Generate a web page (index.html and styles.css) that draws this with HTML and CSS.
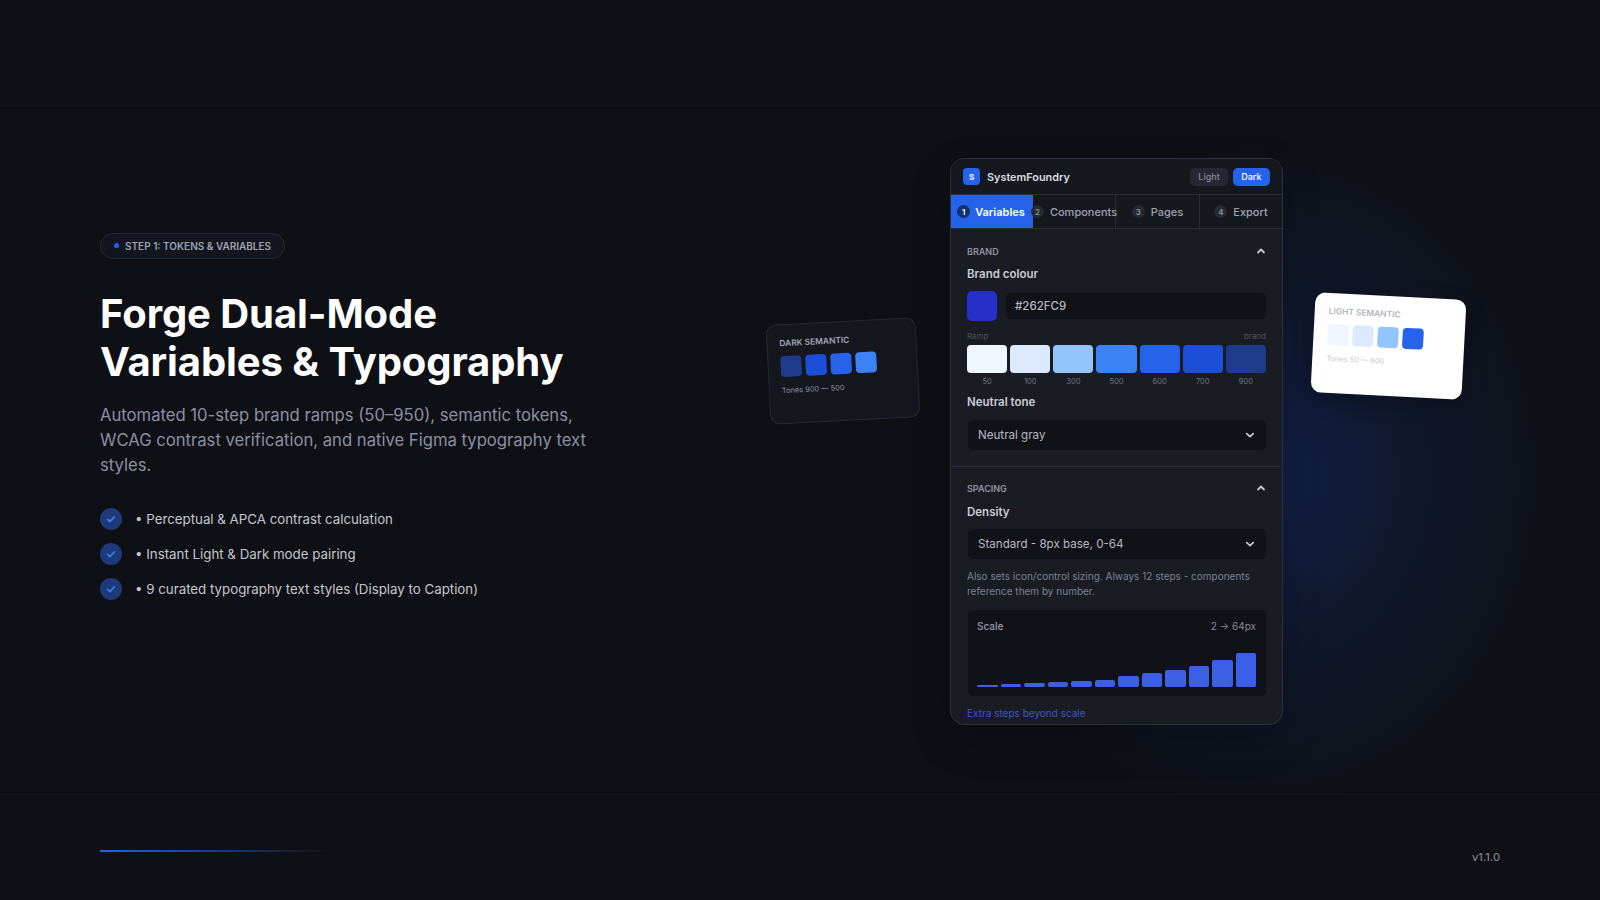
FILE: index.html
```html
<!DOCTYPE html>
<html lang="en">
<head>
    <meta charset="UTF-8">
    <meta name="viewport" content="width=device-width, initial-scale=1.0">
    <title>SystemFoundry - Tokens &amp; Variables</title>
    <link rel="stylesheet" href="styles.css">
</head>
<body>
    <div class="top-band"></div>

    <main class="stage">
        <div class="glow"></div>

        <section class="intro">
            <div class="step-badge"><span class="step-dot"></span>STEP 1: TOKENS &amp; VARIABLES</div>
            <h1 class="headline">Forge Dual-Mode<br>Variables &amp; Typography</h1>
            <p class="lead">Automated 10-step brand ramps (50–950), semantic tokens, WCAG contrast verification, and native Figma typography text styles.</p>
            <ul class="features">
                <li class="feature">
                    <span class="check"><svg width="12" height="12" viewBox="0 0 12 12" fill="none"><path d="M2.6 6.4l2.3 2.2 4.5-4.8" stroke="#3b82f6" stroke-width="1.6" stroke-linecap="round" stroke-linejoin="round"/></svg></span>
                    • Perceptual &amp; APCA contrast calculation
                </li>
                <li class="feature">
                    <span class="check"><svg width="12" height="12" viewBox="0 0 12 12" fill="none"><path d="M2.6 6.4l2.3 2.2 4.5-4.8" stroke="#3b82f6" stroke-width="1.6" stroke-linecap="round" stroke-linejoin="round"/></svg></span>
                    • Instant Light &amp; Dark mode pairing
                </li>
                <li class="feature">
                    <span class="check"><svg width="12" height="12" viewBox="0 0 12 12" fill="none"><path d="M2.6 6.4l2.3 2.2 4.5-4.8" stroke="#3b82f6" stroke-width="1.6" stroke-linecap="round" stroke-linejoin="round"/></svg></span>
                    • 9 curated typography text styles (Display to Caption)
                </li>
            </ul>
        </section>

        <div class="float-card float-dark">
            <div class="float-title">DARK SEMANTIC</div>
            <div class="float-swatches">
                <span class="float-swatch tone-900"></span>
                <span class="float-swatch tone-700"></span>
                <span class="float-swatch tone-600"></span>
                <span class="float-swatch tone-500"></span>
            </div>
            <div class="float-note">Tones 900 — 500</div>
        </div>

        <div class="float-card float-light">
            <div class="float-title">LIGHT SEMANTIC</div>
            <div class="float-swatches">
                <span class="float-swatch tone-50"></span>
                <span class="float-swatch tone-100"></span>
                <span class="float-swatch tone-300"></span>
                <span class="float-swatch tone-600"></span>
            </div>
            <div class="float-note">Tones 50 — 600</div>
        </div>

        <section class="plugin">
            <header class="plugin-head">
                <span class="logo">S</span>
                <span class="plugin-name">SystemFoundry</span>
                <span class="mode">Light</span>
                <span class="mode mode-on">Dark</span>
            </header>

            <nav class="tabs">
                <div class="tab tab-on"><span class="tab-num">1</span>Variables</div>
                <div class="tab"><span class="tab-num">2</span>Components</div>
                <div class="tab"><span class="tab-num">3</span>Pages</div>
                <div class="tab"><span class="tab-num">4</span>Export</div>
            </nav>

            <div class="group group-brand">
                <div class="group-head">BRAND
                    <svg width="10" height="10" viewBox="0 0 10 10" fill="none"><path d="M2 6.5l3-3 3 3" stroke="#c3c7d0" stroke-width="1.8" stroke-linecap="round" stroke-linejoin="round"/></svg>
                </div>
                <div class="field-label">Brand colour</div>
                <div class="colour-row">
                    <span class="colour-chip"></span>
                    <div class="colour-input">#262FC9</div>
                </div>
                <div class="ramp-head"><span>Ramp</span><span>brand</span></div>
                <div class="ramp">
                    <div class="ramp-step"><span class="ramp-chip tone-50"></span>50</div>
                    <div class="ramp-step"><span class="ramp-chip tone-100"></span>100</div>
                    <div class="ramp-step"><span class="ramp-chip tone-300"></span>300</div>
                    <div class="ramp-step"><span class="ramp-chip tone-500"></span>500</div>
                    <div class="ramp-step"><span class="ramp-chip tone-600"></span>600</div>
                    <div class="ramp-step"><span class="ramp-chip tone-700"></span>700</div>
                    <div class="ramp-step"><span class="ramp-chip tone-900"></span>900</div>
                </div>
                <div class="field-label label-tone">Neutral tone</div>
                <div class="select">Neutral gray
                    <svg width="12" height="12" viewBox="0 0 12 12" fill="none"><path d="M2.8 4.6L6 7.6l3.2-3" stroke="#c3c7d0" stroke-width="1.8" stroke-linecap="round" stroke-linejoin="round"/></svg>
                </div>
            </div>

            <div class="group group-spacing">
                <div class="group-head">SPACING
                    <svg width="10" height="10" viewBox="0 0 10 10" fill="none"><path d="M2 6.5l3-3 3 3" stroke="#c3c7d0" stroke-width="1.8" stroke-linecap="round" stroke-linejoin="round"/></svg>
                </div>
                <div class="field-label">Density</div>
                <div class="select">Standard - 8px base, 0-64
                    <svg width="12" height="12" viewBox="0 0 12 12" fill="none"><path d="M2.8 4.6L6 7.6l3.2-3" stroke="#c3c7d0" stroke-width="1.8" stroke-linecap="round" stroke-linejoin="round"/></svg>
                </div>
                <p class="hint">Also sets icon/control sizing. Always 12 steps - components reference them by number.</p>
                <div class="scale">
                    <div class="scale-head"><span class="scale-title">Scale</span><span>2 → 64px</span></div>
                    <div class="bars">
                        <span class="bar" style="height: 2px"></span>
                        <span class="bar" style="height: 3px"></span>
                        <span class="bar" style="height: 4px"></span>
                        <span class="bar" style="height: 5px"></span>
                        <span class="bar" style="height: 6px"></span>
                        <span class="bar" style="height: 7px"></span>
                        <span class="bar" style="height: 11px"></span>
                        <span class="bar" style="height: 14px"></span>
                        <span class="bar" style="height: 17px"></span>
                        <span class="bar" style="height: 21px"></span>
                        <span class="bar" style="height: 27px"></span>
                        <span class="bar" style="height: 34px"></span>
                    </div>
                </div>
                <div class="extra-link">Extra steps beyond scale</div>
            </div>
        </section>
    </main>

    <footer class="bottom-band">
        <div class="progress"></div>
        <div class="version">v1.1.0</div>
    </footer>
</body>
</html>
```

FILE: styles.css
```css
:root {
    --bg: #0e1015;
    --panel: #1a1c24;
    --field: #111217;
    --line: #2a2d37;
    --blue: #2563eb;
    --muted: #8a90a3;
}

* {
    box-sizing: border-box;
}

body {
    margin: 0;
    width: 1600px;
    height: 900px;
    overflow: hidden;
    background: var(--bg);
    color: #fff;
    font-family: Inter, "Liberation Sans", sans-serif;
    display: flex;
    flex-direction: column;
}

.top-band {
    height: 106px;
    flex: none;
    border-bottom: 1px solid #16181e;
}

.stage {
    height: 688px;
    flex: none;
    position: relative;
    overflow: hidden;
    display: flex;
    justify-content: space-between;
    align-items: flex-start;
    padding: 52px 317px 0 100px;
}

.glow {
    position: absolute;
    left: 960px;
    top: 30px;
    width: 600px;
    height: 680px;
    background: radial-gradient(closest-side, rgba(29, 78, 216, 0.25), rgba(29, 78, 216, 0.11) 55%, rgba(29, 78, 216, 0) 100%);
}

/* left column */
.intro {
    width: 520px;
    padding-top: 74px;
    position: relative;
}

.step-badge {
    display: inline-flex;
    align-items: center;
    gap: 6px;
    height: 26px;
    padding: 0 13px;
    border: 1px solid #262a35;
    border-radius: 13px;
    background: #13161e;
    color: #9ca3b4;
    font-size: 10px;
    font-weight: 600;
}

.step-dot {
    width: 5px;
    height: 5px;
    border-radius: 50%;
    background: var(--blue);
}

.headline {
    margin: 31px 0 0;
    font-size: 40px;
    line-height: 48px;
    font-weight: 700;
    letter-spacing: -0.08px;
}

.lead {
    margin: 17px 0 0;
    width: 500px;
    font-size: 16.65px;
    line-height: 25px;
    color: var(--muted);
}

.features {
    list-style: none;
    margin: 30px 0 0;
    padding: 0;
    display: flex;
    flex-direction: column;
    gap: 13px;
}

.feature {
    display: flex;
    align-items: center;
    gap: 13px;
    height: 22px;
    font-size: 13.3px;
    color: #c4c7cf;
}

.check {
    width: 22px;
    height: 22px;
    border-radius: 50%;
    background: #1e3a7a;
    display: flex;
    align-items: center;
    justify-content: center;
}

/* floating token cards */
.float-card {
    position: absolute;
    width: 151px;
    height: 100px;
    padding: 13px 14px;
    border-radius: 10px;
}

.float-dark {
    left: 768px;
    top: 215px;
    width: 150px;
    padding-left: 12px;
    background: #15171e;
    border: 1px solid #262932;
    transform: rotate(-3deg);
}

.float-light {
    left: 1313px;
    top: 190px;
    background: #fff;
    box-shadow: 0 6px 20px rgba(0, 0, 0, 0.3);
    transform: rotate(3deg);
}

.float-title {
    font-size: 8.4px;
    line-height: 11px;
    font-weight: 600;
    color: #a3a8b5;
}

.float-light .float-title {
    color: #b0b4bd;
}

.float-swatches {
    display: flex;
    gap: 4px;
    margin-top: 7px;
}

.float-swatch {
    width: 21px;
    height: 21px;
    border-radius: 4px;
}

.float-note {
    margin-top: 9px;
    font-size: 7.4px;
    color: #8d92a0;
}

.float-light .float-note {
    color: #c8cbd2;
}

.tone-50 { background: #eff6ff; }
.tone-100 { background: #dbeafe; }
.tone-300 { background: #93c5fd; }
.tone-500 { background: #3b82f6; }
.tone-600 { background: #2563eb; }
.tone-700 { background: #1d4ed8; }
.tone-900 { background: #1e3a8a; }

/* plugin window */
.plugin {
    width: 333px;
    height: 567px;
    position: relative;
    background: var(--panel);
    border: 1px solid #2e313b;
    border-radius: 14px;
    overflow: hidden;
    box-shadow: 0 16px 40px rgba(0, 0, 0, 0.2);
}

.plugin-head {
    height: 36px;
    display: flex;
    align-items: center;
    padding: 0 12px;
    gap: 5px;
    border-bottom: 1px solid var(--line);
    background: #16181f;
}

.logo {
    width: 17px;
    height: 17px;
    border-radius: 4px;
    background: var(--blue);
    color: #fff;
    font-size: 8px;
    font-weight: 700;
    display: flex;
    align-items: center;
    justify-content: center;
}

.plugin-name {
    flex: 1;
    margin-left: 2px;
    font-size: 10.85px;
    font-weight: 600;
    color: #d9dbe1;
}

.mode {
    height: 18px;
    padding: 0 8px;
    border-radius: 5px;
    background: #252832;
    color: #878d9c;
    font-size: 9px;
    font-weight: 500;
    display: flex;
    align-items: center;
}

.mode-on {
    padding: 0 8.5px;
    background: var(--blue);
    color: #fff;
}

.tabs {
    height: 34px;
    display: grid;
    grid-template-columns: 82px 83px 84px 1fr;
    border-bottom: 1px solid var(--line);
    background: #16181f;
}

.tab {
    display: flex;
    align-items: center;
    justify-content: center;
    gap: 6px;
    font-size: 11px;
    font-weight: 500;
    color: #9ea3b0;
    border-right: 1px solid var(--line);
    white-space: nowrap;
}

.tab:last-child {
    border-right: 0;
}

.tab-on {
    gap: 5px;
    padding-right: 2px;
    background: var(--blue);
    color: #fff;
    font-weight: 600;
    border-right: 0;
}

.tab-num {
    width: 13px;
    height: 13px;
    border-radius: 50%;
    background: #262933;
    color: #8f94a1;
    font-size: 8px;
    font-weight: 600;
    display: flex;
    align-items: center;
    justify-content: center;
    flex: none;
}

.tab-on .tab-num {
    background: #12306f;
    color: #fff;
}

.group {
    padding: 0 16px;
}

.group-brand {
    height: 238px;
    padding-top: 16px;
    border-bottom: 1px solid var(--line);
    margin: 0 1px;
    padding-left: 15px;
    padding-right: 15px;
}

.group-spacing {
    padding-top: 15px;
}

.group-head {
    display: flex;
    justify-content: space-between;
    align-items: center;
    height: 12px;
    font-size: 9px;
    font-weight: 600;
    color: #8f94a3;
}

.field-label {
    margin-top: 10px;
    font-size: 11.5px;
    line-height: 14px;
    font-weight: 600;
    color: #c9ccd4;
}

.group-spacing .field-label {
    margin-top: 11px;
}

.colour-row {
    display: flex;
    align-items: center;
    gap: 9px;
    margin-top: 10px;
}

.colour-chip {
    width: 30px;
    height: 30px;
    border-radius: 5px;
    background: #262fc9;
}

.colour-input {
    flex: 1;
    height: 26px;
    padding-left: 9px;
    display: flex;
    align-items: center;
    border-radius: 5px;
    background: var(--field);
    font-size: 11.5px;
    font-weight: 500;
    color: #b6bac4;
}

.ramp-head {
    display: flex;
    justify-content: space-between;
    margin-top: 10px;
    font-size: 8px;
    line-height: 10px;
    color: #4d515d;
}

.ramp {
    display: grid;
    grid-template-columns: repeat(7, 1fr);
    gap: 3px;
    margin-top: 4px;
}

.ramp-step {
    display: flex;
    flex-direction: column;
    align-items: center;
    gap: 4px;
    font-size: 7.5px;
    line-height: 10px;
    color: #6f7482;
}

.ramp-chip {
    width: 100%;
    height: 28px;
    border-radius: 4px;
}

.label-tone {
    margin-top: 8px;
}

.select {
    height: 30px;
    margin: 11px 0 0 1px;
    padding: 0 10px;
    display: flex;
    justify-content: space-between;
    align-items: center;
    border-radius: 5px;
    background: var(--field);
    font-size: 11.6px;
    color: #b6bac4;
}

.group-spacing .select {
    margin-top: 10px;
}

.hint {
    margin: 10px 0 0;
    font-size: 10px;
    line-height: 15px;
    color: #7d8291;
}

.scale {
    height: 86px;
    margin: 11px 0 0 1px;
    padding: 10px 10px 9px 9px;
    border-radius: 5px;
    background: var(--field);
    display: flex;
    flex-direction: column;
    justify-content: space-between;
}

.scale-head {
    display: flex;
    justify-content: space-between;
    font-size: 10px;
    line-height: 12px;
    color: #858a98;
}

.scale-title {
    font-weight: 500;
    color: #989dab;
}

.bars {
    display: grid;
    grid-template-columns: repeat(12, 1fr);
    gap: 3px;
    align-items: end;
}

.bar {
    border-radius: 2px;
    background: #3b5fe6;
}

.extra-link {
    margin-top: 11px;
    font-size: 10px;
    line-height: 12px;
    color: #3d55c7;
}

.bottom-band {
    flex: 1;
    position: relative;
    border-top: 1px solid #16181e;
    padding: 0 100px;
    display: flex;
    justify-content: space-between;
}

.progress {
    width: 236px;
    height: 2px;
    margin-top: 55px;
    background: linear-gradient(90deg, var(--blue), rgba(37, 99, 235, 0));
}

.version {
    margin-top: 55px;
    font-size: 11px;
    line-height: 14px;
    font-weight: 500;
    color: #7b808c;
}
```
